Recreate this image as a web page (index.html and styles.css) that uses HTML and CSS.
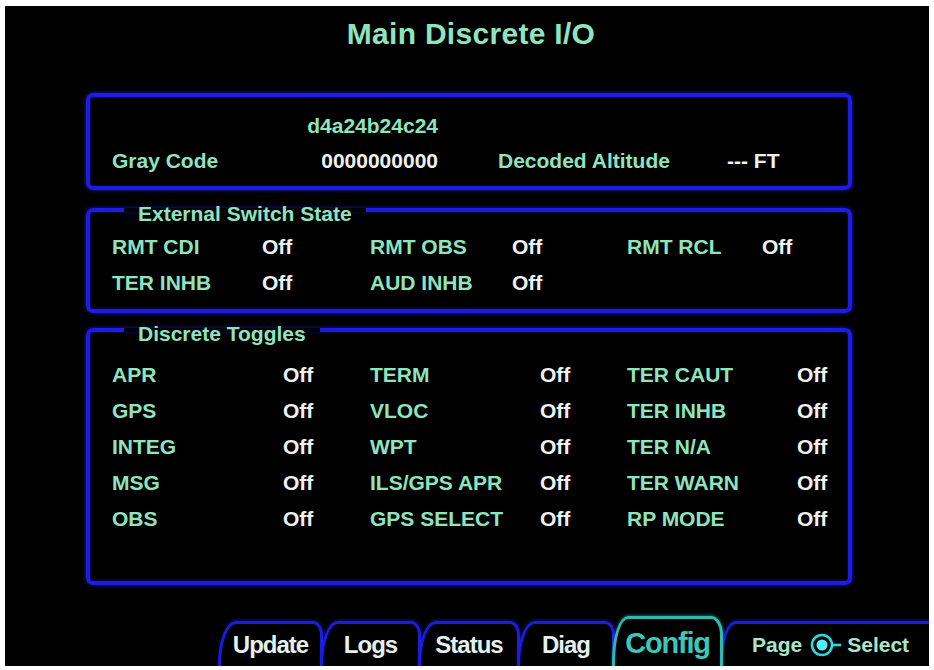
FILE: index.html
```html
<!DOCTYPE html>
<html>
<head>
<meta charset="utf-8">
<link rel="stylesheet" href="styles.css">
</head>
<body>
<div class="screen">
  <h1 class="title">Main Discrete I/O</h1>

  <div class="box code-box">
    <div class="code-grid">
      <span></span><span class="lbl right">d4a24b24c24</span><span></span><span></span><span></span>
      <span class="lbl">Gray Code</span><span class="val right">0000000000</span><span></span><span class="lbl">Decoded Altitude</span><span class="val">--- FT</span>
    </div>
  </div>

  <fieldset class="box group switch">
    <legend>External Switch State</legend>
    <div class="grid grid-switch">
      <span class="lbl">RMT CDI</span><span class="val">Off</span>
      <span class="lbl">RMT OBS</span><span class="val">Off</span>
      <span class="lbl">RMT RCL</span><span class="val">Off</span>
      <span class="lbl">TER INHB</span><span class="val">Off</span>
      <span class="lbl">AUD INHB</span><span class="val">Off</span>
    </div>
  </fieldset>

  <fieldset class="box group toggles">
    <legend>Discrete Toggles</legend>
    <div class="grid grid-toggles">
      <span class="lbl">APR</span><span class="val">Off</span>
      <span class="lbl">TERM</span><span class="val">Off</span>
      <span class="lbl">TER CAUT</span><span class="val">Off</span>
      <span class="lbl">GPS</span><span class="val">Off</span>
      <span class="lbl">VLOC</span><span class="val">Off</span>
      <span class="lbl">TER INHB</span><span class="val">Off</span>
      <span class="lbl">INTEG</span><span class="val">Off</span>
      <span class="lbl">WPT</span><span class="val">Off</span>
      <span class="lbl">TER N/A</span><span class="val">Off</span>
      <span class="lbl">MSG</span><span class="val">Off</span>
      <span class="lbl">ILS/GPS APR</span><span class="val">Off</span>
      <span class="lbl">TER WARN</span><span class="val">Off</span>
      <span class="lbl">OBS</span><span class="val">Off</span>
      <span class="lbl">GPS SELECT</span><span class="val">Off</span>
      <span class="lbl">RP MODE</span><span class="val">Off</span>
    </div>
  </fieldset>

  <div class="tabbar">
    <div class="tab t-update"><span>Update</span></div>
    <div class="tab t-logs"><span>Logs</span></div>
    <div class="tab t-status"><span>Status</span></div>
    <div class="tab t-diag"><span>Diag</span></div>
    <div class="tab t-config active"><span>Config</span></div>
    <div class="tab t-page">
      <span class="hint">Page</span>
      <svg class="knob" width="32" height="26" viewBox="0 0 32 26">
        <circle cx="12" cy="13" r="10" fill="none" stroke="#2fd8dc" stroke-width="2.6"/>
        <circle cx="12" cy="13" r="5.5" fill="#4ff2f2"/>
        <line x1="22" y1="13" x2="31" y2="13" stroke="#2fd8dc" stroke-width="2.6"/>
      </svg>
      <span class="hint">Select</span>
    </div>
  </div>
</div>
</body>
</html>
```
FILE: styles.css
```css
* { box-sizing: border-box; }
html, body { margin: 0; padding: 0; background: #ffffff; }
body { font-family: "Liberation Sans", Arial, sans-serif; }

.screen {
  margin: 6px 5px 4px 5px;
  width: 924px;
  height: 660px;
  background: #000;
  display: flex;
  flex-direction: column;
  overflow: hidden;
}

.title {
  margin: 10px 0 0 0;
  text-align: center;
  font-size: 30px;
  line-height: 36px;
  font-weight: bold;
  color: #8fe3bd;
  letter-spacing: 0.3px;
  padding-left: 8px;
}

.box {
  margin-left: 81px;
  width: 766px;
  border: 4px solid #1c1ce6;
  border-radius: 7px;
  box-shadow: 0 0 4px rgba(40, 40, 255, 0.7), inset 0 0 3px rgba(40, 40, 255, 0.5);
}

.lbl, .val, legend {
  font-size: 21px;
  font-weight: bold;
  line-height: 26px;
  white-space: nowrap;
}
.lbl { color: #8fe3bd; }
.val { color: #f0f2f0; }
.right { text-align: right; }

.code-box {
  margin-top: 41px;
  height: 97px;
  padding: 16px 0 0 22px;
}
.code-grid {
  display: grid;
  grid-template-columns: 186px 140px 60px 229px auto;
  row-gap: 9px;
}

.group {
  padding: 0;
  min-inline-size: 0;
}
.group legend {
  color: #8fe3bd;
  margin-left: 34px;
  padding: 8px 14px 0 14px;
  line-height: 20px;
}

.switch { margin-top: 6px; height: 117px; }
.toggles { margin-top: 3px; height: 269px; }

.grid {
  display: grid;
  padding-left: 22px;
  row-gap: 10px;
}
.grid-switch {
  padding-top: 10px;
  grid-template-columns: 150px 108px 142px 115px 135px auto;
}
.grid-toggles {
  padding-top: 18px;
  grid-template-columns: 171px 87px 170px 87px 170px auto;
}

.tabbar {
  margin-top: auto;
  margin-left: 213px;
  height: 50px;
  display: flex;
}
.tab {
  position: relative;
  height: 50px;
  padding-top: 8px;
  text-align: center;
  font-size: 24px;
  font-weight: bold;
  line-height: 42px;
  letter-spacing: -1px;
  color: #e4f1ec;
  margin-right: -3px;
}
.tab span { position: relative; z-index: 2; }
.tab::before {
  content: "";
  position: absolute;
  left: 0;
  right: 0;
  top: 5px;
  bottom: -8px;
  border: 3px solid #1c1ce0;
  border-bottom: 0;
  border-radius: 18px 10px 0 0 / 44px 14px 0 0;
  box-shadow: 0 -1px 3px rgba(40, 40, 255, 0.5);
  z-index: 1;
}
.t-update { width: 105px; }
.t-logs { width: 101px; }
.t-status { width: 102px; }
.t-diag { width: 98px; }
.t-config {
  width: 111px;
  color: #3cc8b8;
  font-size: 29px;
  letter-spacing: -1.2px;
  padding-top: 6px;
}
.t-config::before {
  top: 0;
  border-color: #2fb8b0;
  border-radius: 16px 12px 0 0 / 46px 18px 0 0;
  box-shadow: 0 -1px 3px rgba(40, 200, 190, 0.5);
  z-index: 3;
}
.t-page {
  flex: 1;
  display: flex;
  align-items: center;
  padding: 8px 0 0 32px;
  gap: 8px;
  letter-spacing: 0;
  margin-right: 0;
}
.t-page::before {
  right: -20px;
  border-right: 0;
  border-radius: 16px 0 0 0 / 40px 0 0 0;
}
.hint {
  font-size: 21px;
  font-weight: bold;
  color: #a9e6c8;
  line-height: 30px;
}
.knob { position: relative; z-index: 2; margin-right: -3px; }
```
